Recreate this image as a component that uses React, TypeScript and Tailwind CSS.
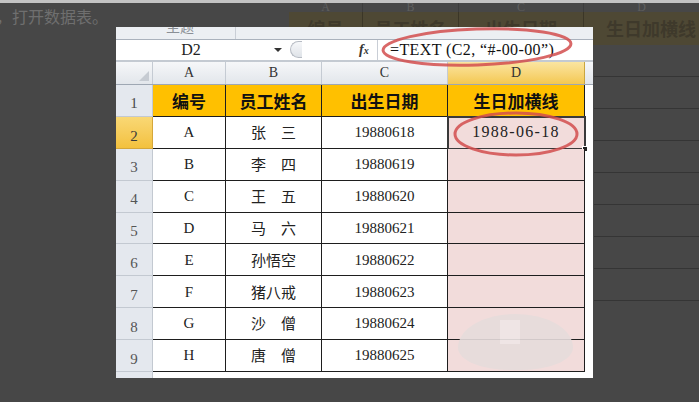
import clsx from 'clsx';

const cn = clsx;
const COLS = 'grid grid-cols-[37px_73px_96px_126px_137px_8px]';
const SERIF = "font-['Liberation_Serif','Noto_Sans_CJK_SC',serif]";
const CJK = "font-['Noto_Sans_CJK_SC',sans-serif]";

const rows = [
  { id: 'A', name: '张　三', born: '19880618', dash: '1988-06-18' },
  { id: 'B', name: '李　四', born: '19880619', dash: '' },
  { id: 'C', name: '王　五', born: '19880620', dash: '' },
  { id: 'D', name: '马　六', born: '19880621', dash: '' },
  { id: 'E', name: '孙悟空', born: '19880622', dash: '' },
  { id: 'F', name: '猪八戒', born: '19880623', dash: '' },
  { id: 'G', name: '沙　僧', born: '19880624', dash: '' },
  { id: 'H', name: '唐　僧', born: '19880625', dash: '' },
];

function GhostBackdrop() {
  return (
    <div className="flex flex-col">
      <div className="h-[3px] bg-[#c3c3c3]" />
      <div className="flex h-[42px]">
        <div className={cn('w-[293px] pt-[3px] -ml-[4px] text-[16px] leading-[20px] text-[#6f6f6f]', CJK)}>
          ，打开数据表。
        </div>
        <div className="flex-1 flex flex-col">
          <div className={cn('h-[9px] overflow-hidden grid grid-cols-[74px_96px_125px_1fr] text-[12px] leading-[8px] text-[#5f5f5f]', SERIF)}>
            <span className="text-center border-r border-[#3c3c3c]">A</span>
            <span className="text-center border-r border-[#3c3c3c]">B</span>
            <span className="text-center border-r border-[#3c3c3c]">C</span>
            <span className="text-center">D</span>
          </div>
          <div className={cn('h-[33px] bg-[#4e4834] grid grid-cols-[74px_96px_125px_1fr] items-center text-[18px] font-bold text-[#3e392b]', CJK)}>
            <span className="border-r border-[#3b3627] h-full flex items-center justify-center">编号</span>
            <span className="border-r border-[#3b3627] h-full flex items-center justify-center">员工姓名</span>
            <span className="border-r border-[#3b3627] h-full flex items-center justify-center">出生日期</span>
            <span className="pl-[22px]">生日加横线</span>
          </div>
        </div>
      </div>
      <div className="pl-[594px] flex flex-col">
        {Array.from({ length: 8 }).map((_, i) => (
          <div key={i} className="h-[32px] border-b border-[#353535]" />
        ))}
      </div>
    </div>
  );
}

function FormulaBar() {
  return (
    <div className="h-[22px] flex items-center bg-white border-b-2 border-[#c4cad2]">
      <div className={cn('w-[150px] text-center text-[16px] text-[#222]', SERIF)}>D2</div>
      <div className="w-[24px] flex justify-center">
        <div className="w-0 h-0 border-l-[4px] border-r-[4px] border-t-[4px] border-l-transparent border-r-transparent border-t-[#333]" />
      </div>
      <div className="w-[12px] h-[17px] rounded-l-full border-l border-t border-b border-[#b7bcc4] bg-gradient-to-b from-[#f7f8fa] to-[#dfe3e8]" />
      <div className="w-[57px]" />
      <div className={cn('w-[18px] text-[14px] italic font-bold text-[#333] leading-none', SERIF)}>
        f<span className="text-[10px]">x</span>
      </div>
      <div className="w-px h-full bg-[#c9ced6]" />
      <div className={cn('pl-[12px] text-[16px] text-[#111] tracking-[0.4px] whitespace-nowrap', SERIF)}>
        =TEXT (C2, “#-00-00”)
      </div>
    </div>
  );
}

function ColumnHeader() {
  return (
    <div className={cn(COLS, 'h-[23px] bg-gradient-to-b from-[#f6f7f9] to-[#e2e6eb] border-b border-[#9ea7b3] text-[14px] text-[#333]', SERIF)}>
      <div className="border-r border-[#c5cbd3] flex items-end justify-end p-[3px]">
        <svg width="10" height="10" viewBox="0 0 10 10">
          <path d="M10 0 L10 10 L0 10 Z" fill="#c6cbd2" />
        </svg>
      </div>
      <div className="border-r border-[#c5cbd3] flex items-center justify-center">A</div>
      <div className="border-r border-[#c5cbd3] flex items-center justify-center">B</div>
      <div className="border-r border-[#c5cbd3] flex items-center justify-center">C</div>
      <div className="border-r border-[#c9a640] flex items-center justify-center bg-gradient-to-b from-[#fbe5a0] to-[#f4c84f]">D</div>
      <div />
    </div>
  );
}

export default function App() {
  return (
    <div className="relative w-[699px] h-[402px] bg-[#474747] overflow-hidden">
      <GhostBackdrop />

      {/* Screenshot of the sheet, shown over the dimmed page */}
      <div className="absolute left-[116px] top-[27px] w-[477px] h-[351px] bg-white overflow-hidden flex flex-col">
        <div className="h-[13px] flex bg-[#eceff3] border-b border-[#aab2bd]">
          <div className="w-[120px] border-r border-[#c9ced6] overflow-hidden">
            <div className={cn('pl-[50px] -mt-[11px] text-[14px] text-[#8a8f96]', CJK)}>主题</div>
          </div>
          <div className="flex-1" />
        </div>

        <FormulaBar />
        <ColumnHeader />

        {/* Row 1: headers */}
        <div className={cn(COLS, 'h-[32px]')}>
          <div className={cn('bg-[#e4e8ee] border-r border-b border-[#c3c9d1] flex items-center justify-center pt-[6px] text-[15px] text-[#4a4a4a]', SERIF)}>1</div>
          {['编号', '员工姓名', '出生日期', '生日加横线'].map(h => (
            <div key={h} className={cn('bg-[#ffc000] border-r border-b border-[#1e1e1e] flex items-center justify-center text-[17px] font-bold text-[#111]', CJK)}>
              {h}
            </div>
          ))}
          <div />
        </div>

        {rows.map((r, i) => (
          <div key={r.id} className={cn(COLS, 'h-[32px]')}>
            <div
              className={cn(
                'border-r border-b flex items-center justify-center pt-[7px] text-[15px]',
                SERIF,
                i === 0
                  ? 'bg-gradient-to-b from-[#f9d874] to-[#f3c13d] border-[#d5a73a] text-[#3a3a3a]'
                  : 'bg-[#e4e8ee] border-[#c3c9d1] text-[#555]'
              )}
            >
              {i + 2}
            </div>
            <div className={cn('border-r border-b border-[#1e1e1e] flex items-center justify-center text-[15px] text-[#222]', SERIF)}>{r.id}</div>
            <div className={cn('border-r border-b border-[#1e1e1e] flex items-center justify-center text-[15px] text-[#222]', CJK)}>{r.name}</div>
            <div className={cn('border-r border-b border-[#1e1e1e] flex items-center justify-center text-[15px] text-[#222]', SERIF)}>{r.born}</div>
            <div
              className={cn(
                'relative bg-[#f2dcdb] border-r border-b border-[#1e1e1e] flex items-center justify-center text-[16px] text-[#222] tracking-[1.3px]',
                SERIF,
                i === 0 && 'outline-2 outline-[#3a3a3a] -outline-offset-1'
              )}
            >
              {r.dash}
              {i === 0 && (
                <div className="absolute -right-[4px] -bottom-[4px] w-[6px] h-[6px] bg-[#222] border border-white" />
              )}
            </div>
            <div />
          </div>
        ))}

        {/* Row 10, cut off */}
        <div className={cn(COLS, 'h-[6px]')}>
          <div className="bg-[#e4e8ee] border-r border-[#c3c9d1]" />
          <div />
        </div>

        {/* smudge over D8:D9 */}
        <div className="absolute left-[342px] top-[287px] w-[115px] h-[56px] rounded-[50%_50%_45%_45%/60%_60%_40%_40%] bg-[#e6dcdc] opacity-90">
          <div className="ml-[42px] mt-[6px] w-[20px] h-[24px] bg-[#efe7e7]" />
        </div>
      </div>

      {/* red annotation rings */}
      <svg className="absolute left-0 top-0 pointer-events-none" width="699" height="402">
        <ellipse cx="477" cy="47" rx="94" ry="18" fill="none" stroke="#d24d4d" strokeWidth="3" opacity="0.85" transform="rotate(-2 477 47)" />
        <ellipse cx="516" cy="134" rx="61" ry="21" fill="none" stroke="#d24d4d" strokeWidth="3" opacity="0.85" />
      </svg>
    </div>
  );
}
